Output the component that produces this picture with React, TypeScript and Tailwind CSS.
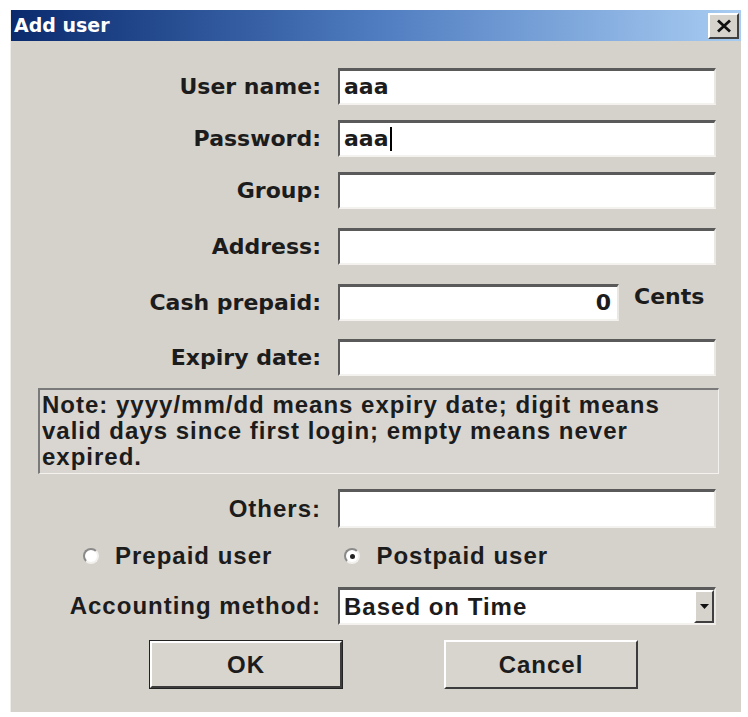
import React from 'react'

const labelFont = "font-['DejaVu_Sans',sans-serif] font-bold text-[22px] text-[#1c1c1c]"
const narrowFont = "font-['Liberation_Sans',Arial,sans-serif] font-bold text-[24px] tracking-[1px] text-[#1c1c1c]"
const sunken =
  'bg-white border-t-[3px] border-l-[2px] border-b-[2px] border-r-[2px] border-t-[#5a5a5a] border-l-[#5a5a5a] border-b-[#f4f2ee] border-r-[#ebe8e3]'

function Field({ value, cursor, className = 'w-[378px]', align = 'left' }: { value?: string; cursor?: boolean; className?: string; align?: 'left' | 'right' }) {
  return (
    <div className={`${sunken} ${className} h-full flex items-center ${align === 'right' ? 'justify-end pr-[6px]' : 'pl-[4px]'}`}>
      <span className={`${labelFont} leading-none`}>{value}</span>
      {cursor && <span className="w-[2px] h-[24px] bg-black ml-[1px]" />}
    </div>
  )
}

function Row({ label, top, h = 'h-[37px]', children }: { label: string; top: string; h?: string; children: React.ReactNode }) {
  return (
    <div className={`flex items-center ${h} ${top}`}>
      <div className={`w-[310px] text-right ${labelFont}`}>{label}</div>
      <div className="ml-[17px] h-full flex items-center">{children}</div>
    </div>
  )
}

function Radio({ checked, label }: { checked?: boolean; label: string }) {
  return (
    <div className="flex items-center">
      <span className="w-[16px] h-[16px] rounded-full bg-white border-2 border-t-[#8a8a8a] border-l-[#8a8a8a] border-b-[#f2f0ec] border-r-[#f2f0ec] flex items-center justify-center">
        {checked && <span className="w-[5px] h-[5px] rounded-full bg-[#222]" />}
      </span>
      <span className={`${narrowFont} ml-[16px]`}>{label}</span>
    </div>
  )
}

function Button({ label, isDefault }: { label: string; isDefault?: boolean }) {
  return (
    <div className={`w-[194px] h-[49px] ${isDefault ? 'border border-[#222]' : ''}`}>
      <div className="w-full h-full bg-[#d8d4ce] border-2 border-t-white border-l-white border-b-[#3c3c3c] border-r-[#3c3c3c] flex items-center justify-center">
        <span className={narrowFont}>{label}</span>
      </div>
    </div>
  )
}

export default function App() {
  return (
    <div className="w-[748px] h-[717px] bg-white pt-[10px] pl-[10px] overflow-hidden">
      <div className="w-[731px] h-[702px] bg-[#d5d1cb] border-l border-[#f0eeea] flex flex-col">
        {/* title bar */}
        <div className="h-[31px] flex items-center justify-between pl-[3px] pr-[2px] bg-gradient-to-r from-[#0b2a6e] via-[#4f7cc0] to-[#a9cdf2]">
          <span className="font-['DejaVu_Sans',sans-serif] font-bold text-[19px] text-white leading-none">Add user</span>
          <div className="w-[31px] h-[26px] shrink-0 bg-[#d6d2cc] border-2 border-t-white border-l-white border-b-[#404040] border-r-[#404040] flex items-center justify-center">
            <svg width="16" height="14" viewBox="0 0 16 14">
              <path d="M2 1.5 L14 12.5 M14 1.5 L2 12.5" stroke="#111" strokeWidth="2.8" />
            </svg>
          </div>
        </div>

        {/* form */}
        <div className="flex flex-col">
          <Row label="User name:" top="mt-[27px]">
            <Field value="aaa" />
          </Row>
          <Row label="Password:" top="mt-[15px]">
            <Field value="aaa" cursor />
          </Row>
          <Row label="Group:" top="mt-[15px]">
            <Field />
          </Row>
          <Row label="Address:" top="mt-[19px]">
            <Field />
          </Row>
          <Row label="Cash prepaid:" top="mt-[19px]">
            <Field value="0" align="right" className="w-[281px]" />
            <span className={`${labelFont} ml-[15px] self-start mt-[-4px]`}>Cents</span>
          </Row>
          <Row label="Expiry date:" top="mt-[18px]">
            <Field />
          </Row>

          <div className="ml-[27px] mt-[12px] w-[681px] h-[86px] bg-[#d9d6d1] border-t-2 border-l-2 border-t-[#7a7a7a] border-l-[#7a7a7a] border-b border-r border-b-[#f4f2ee] border-r-[#f4f2ee] pl-[2px] pt-[2px]">
            <p className={`${narrowFont} leading-[26px]`}>
              Note: yyyy/mm/dd means expiry date; digit means
              <br />
              valid days since first login; empty means never
              <br />
              expired.
            </p>
          </div>

          <div className="flex items-center h-[39px] mt-[15px]">
            <div className={`w-[310px] text-right ${narrowFont}`}>Others:</div>
            <div className="ml-[17px] h-full">
              <Field />
            </div>
          </div>

          <div className="flex items-center h-[28px] mt-[14px] pl-[72px]">
            <Radio label="Prepaid user" />
            <div className="ml-[72px]">
              <Radio checked label="Postpaid user" />
            </div>
          </div>

          <div className="flex items-center h-[38px] mt-[17px]">
            <div className={`w-[310px] text-right ${narrowFont}`}>Accounting method:</div>
            <div className={`ml-[17px] h-full w-[378px] ${sunken} flex items-center justify-between`}>
              <span className={`${narrowFont} pl-[4px]`}>Based on Time</span>
              <div className="w-[20px] h-full bg-[#d6d2cc] border-2 border-t-white border-l-white border-b-[#404040] border-r-[#404040] flex items-center justify-center">
                <svg width="9" height="5" viewBox="0 0 9 5">
                  <path d="M0 0 H9 L4.5 5 Z" fill="#111" />
                </svg>
              </div>
            </div>
          </div>

          <div className="flex mt-[15px] pl-[138px]">
            <Button label="OK" isDefault />
            <div className="ml-[101px]">
              <Button label="Cancel" />
            </div>
          </div>
        </div>
      </div>
    </div>
  )
}
